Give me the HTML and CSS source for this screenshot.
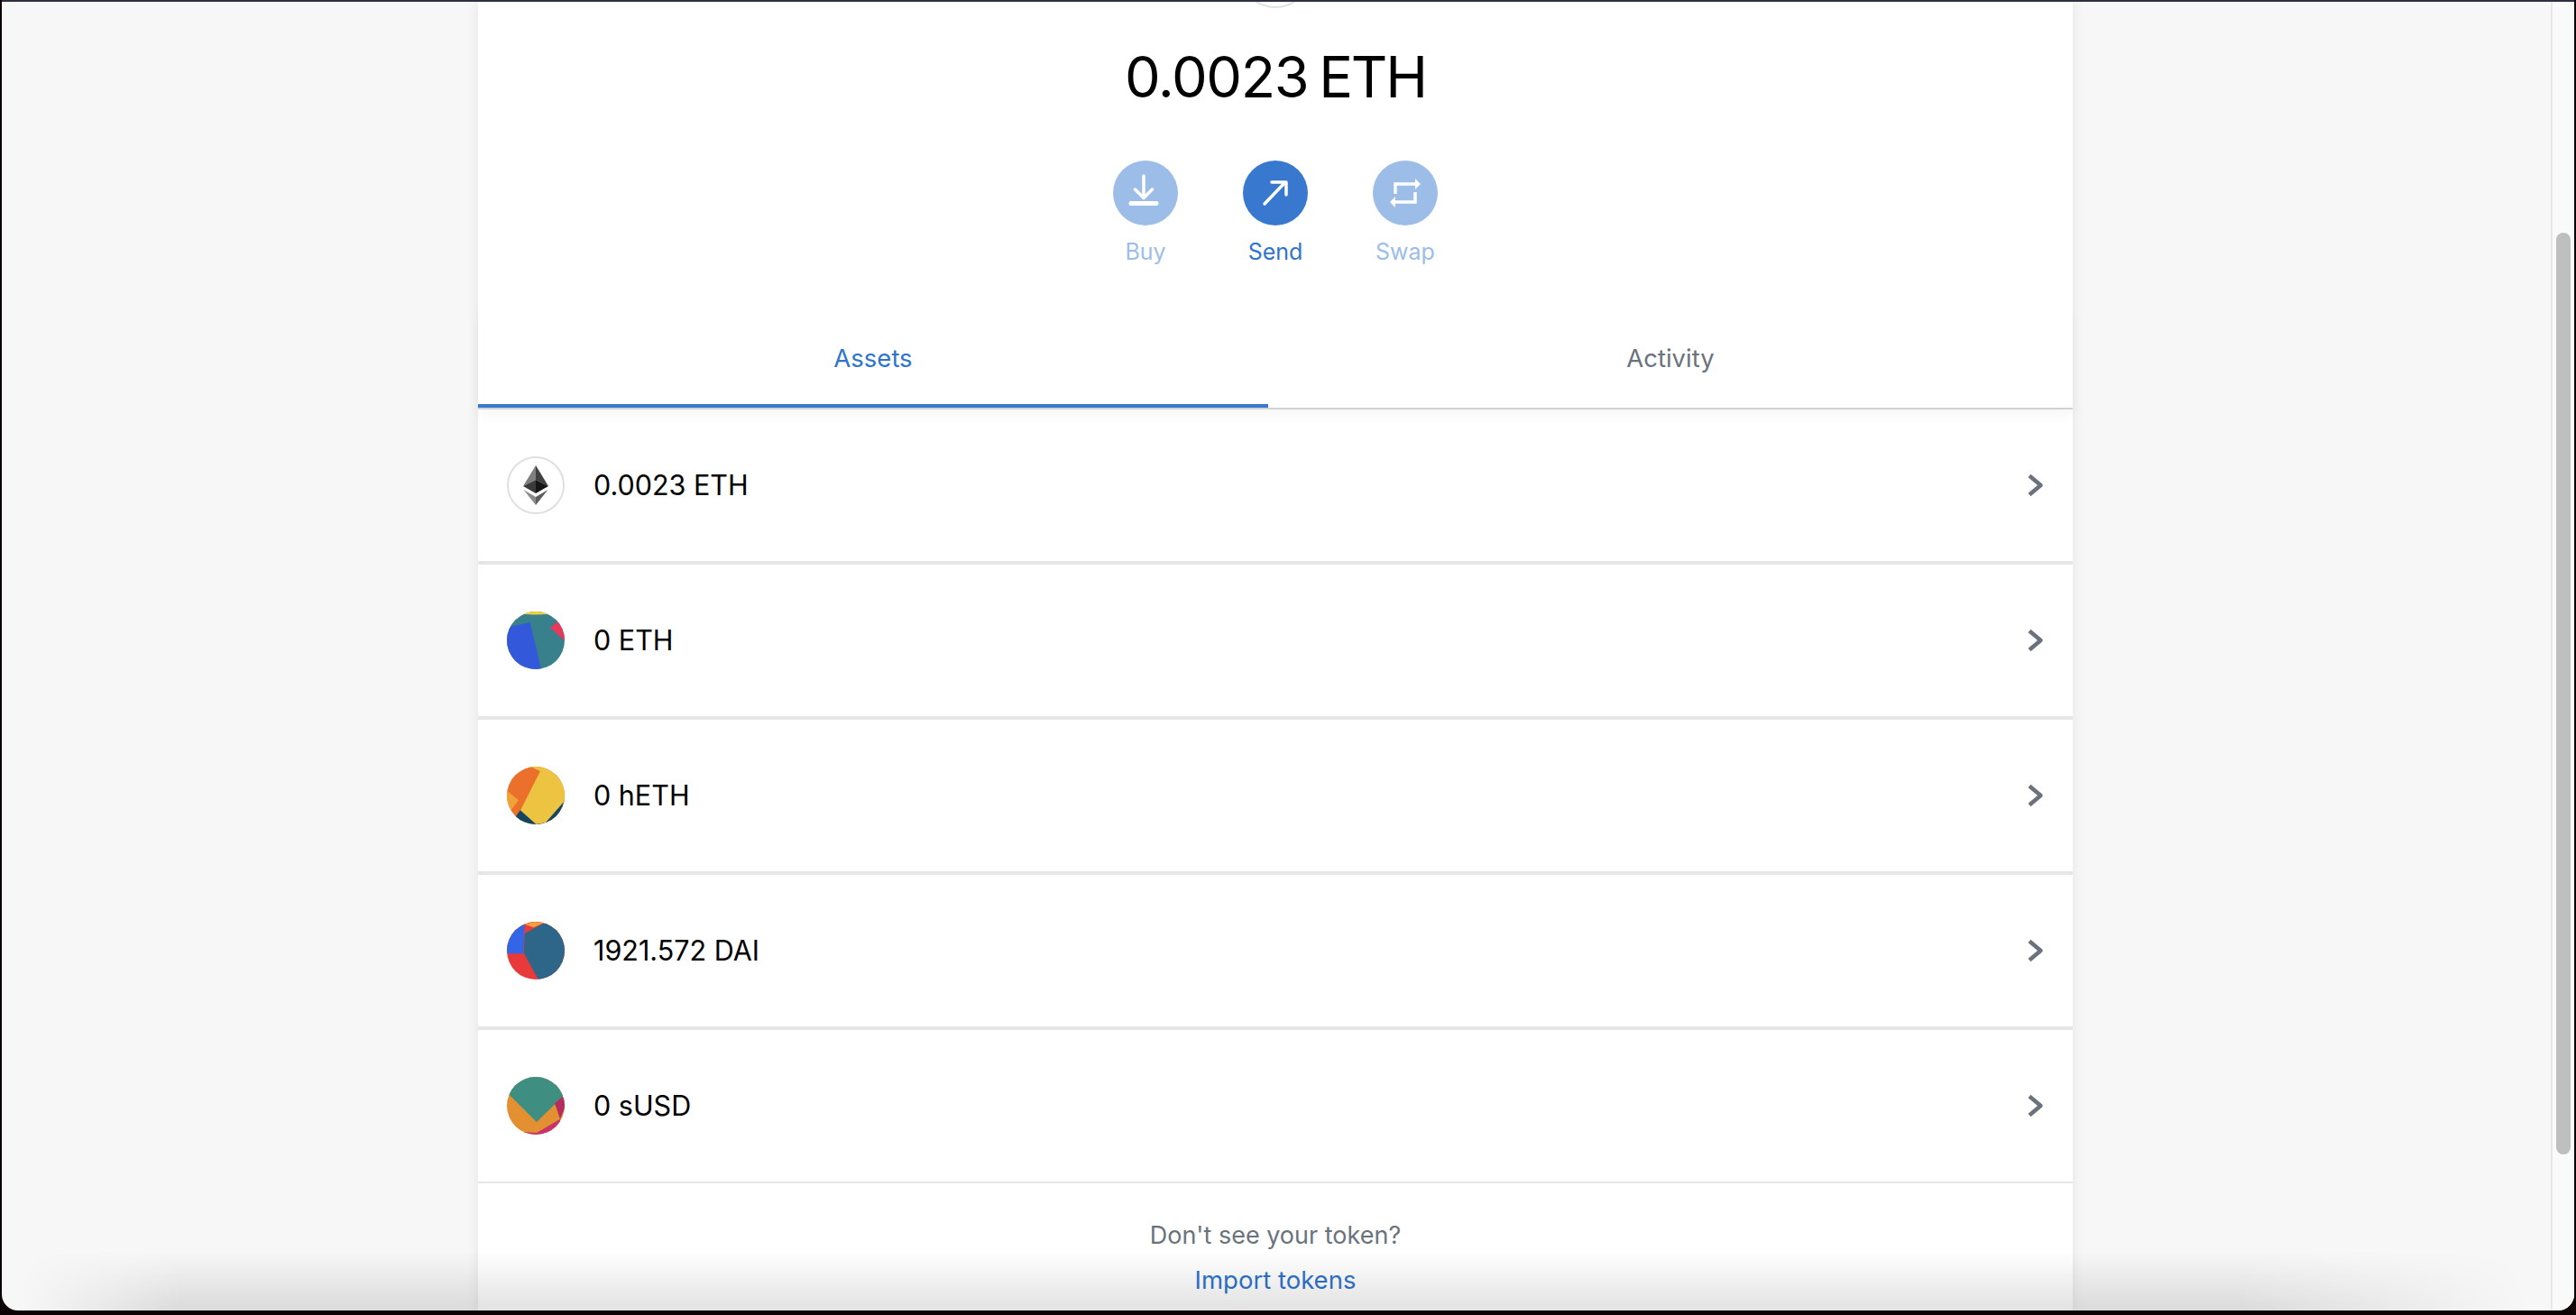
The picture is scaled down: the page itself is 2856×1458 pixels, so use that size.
FILE: index.html
```html
<!DOCTYPE html>
<html lang="en">
<head>
  <meta charset="UTF-8" />
  <title>Wallet</title>
  <link rel="stylesheet" href="styles.css">
</head>
<body>
  <div class="window">
    <div class="page">
      <main class="card">
        <div class="avatar"></div>

        <div class="balance">
          <span class="balance-value">0.0023</span>
          <span>ETH</span>
        </div>

        <div class="actions">
          <div class="action faded">
            <div class="action-icon">
              <svg width="72" height="72" viewBox="0 0 72 72" fill="none" stroke="#fff" stroke-width="3.5" stroke-linecap="round" stroke-linejoin="round">
                <path d="M34 17V41M24.5 32L34 41.5L43.5 32" />
                <path d="M20 47.5H48" stroke-width="5" />
              </svg>
            </div>
            <span>Buy</span>
          </div>
          <div class="action">
            <div class="action-icon">
              <svg width="72" height="72" viewBox="0 0 72 72" fill="none" stroke="#fff" stroke-width="3.5" stroke-linecap="round" stroke-linejoin="round">
                <path d="M24 48L47 24M32 24H48V38" />
              </svg>
            </div>
            <span>Send</span>
          </div>
          <div class="action faded">
            <div class="action-icon">
              <svg width="72" height="72" viewBox="0 0 72 72" fill="none" stroke="#fff" stroke-width="3.5">
                <path d="M25 37V26H48M47 35V46H24" />
                <path d="M47 20L53 26L47 32ZM25 40L19 46L25 52Z" fill="#fff" stroke="none" />
              </svg>
            </div>
            <span>Swap</span>
          </div>
        </div>

        <div class="tabs">
          <div class="tab active">Assets</div>
          <div class="tab">Activity</div>
        </div>

        <div class="assets">
          <div class="asset">
            <svg class="token" width="64" height="64" viewBox="0 0 64 64">
              <circle cx="32" cy="32" r="31" fill="#fff" stroke="#e0e0e0" stroke-width="2" />
              <path d="M32 10L18 33L32 26Z" fill="#7f7f7f" />
              <path d="M32 10L46 33L32 26Z" fill="#404040" />
              <path d="M18 33L32 26V41Z" fill="#3b3b3b" />
              <path d="M46 33L32 26V41Z" fill="#161616" />
              <path d="M18.5 37L32 45V54Z" fill="#8c8c8c" />
              <path d="M45.5 37L32 45V54Z" fill="#5e5e5e" />
            </svg>
            <span class="asset-name">0.0023 ETH</span>
            <svg class="chevron" width="20" height="32" viewBox="0 0 20 32" fill="none" stroke="#6a737d" stroke-width="4.5" stroke-linejoin="round">
              <path d="M4 5.5L16.5 16L4 26.5" />
            </svg>
          </div>

          <div class="asset">
            <svg class="token" width="64" height="64" viewBox="0 0 64 64">
              <clipPath id="clip-eth"><circle cx="32" cy="32" r="32" /></clipPath>
              <g clip-path="url(#clip-eth)">
                <rect width="64" height="64" fill="#38808c" />
                <path d="M18 0H46V3L32 3.5L18 3Z" fill="#f0d23c" />
                <path d="M0 18L3 17L25.7 12L38 64H0Z" fill="#3358d9" />
                <path d="M48 18L58 10H66V34Z" fill="#e8385c" />
              </g>
            </svg>
            <span class="asset-name">0 ETH</span>
            <svg class="chevron" width="20" height="32" viewBox="0 0 20 32" fill="none" stroke="#6a737d" stroke-width="4.5" stroke-linejoin="round">
              <path d="M4 5.5L16.5 16L4 26.5" />
            </svg>
          </div>

          <div class="asset">
            <svg class="token" width="64" height="64" viewBox="0 0 64 64">
              <clipPath id="clip-heth"><circle cx="32" cy="32" r="32" /></clipPath>
              <g clip-path="url(#clip-heth)">
                <rect width="64" height="64" fill="#ea702b" />
                <path d="M0 26.7L13 37.3L4.7 48L0 40Z" fill="#f2a336" />
                <path d="M10 55L15 48L40 50L66 36V66H10Z" fill="#14465f" />
                <path d="M26 0L37 5L15 48.5L32.5 64L43 62L64 38L66 30V0Z" fill="#ecc442" />
              </g>
            </svg>
            <span class="asset-name">0 hETH</span>
            <svg class="chevron" width="20" height="32" viewBox="0 0 20 32" fill="none" stroke="#6a737d" stroke-width="4.5" stroke-linejoin="round">
              <path d="M4 5.5L16.5 16L4 26.5" />
            </svg>
          </div>

          <div class="asset">
            <svg class="token" width="64" height="64" viewBox="0 0 64 64">
              <clipPath id="clip-dai"><circle cx="32" cy="32" r="32" /></clipPath>
              <g clip-path="url(#clip-dai)">
                <rect width="64" height="64" fill="#e83a3a" />
                <path d="M19.7 0L18 35.3H0V0Z" fill="#3366e6" />
                <path d="M19.7 13L40 2L66 0V66H36L18.7 34.7Z" fill="#2d6688" />
                <path d="M19.7 3L30 0L41 1.3L29.7 6.3Z" fill="#f1a23a" />
              </g>
            </svg>
            <span class="asset-name">1921.572 DAI</span>
            <svg class="chevron" width="20" height="32" viewBox="0 0 20 32" fill="none" stroke="#6a737d" stroke-width="4.5" stroke-linejoin="round">
              <path d="M4 5.5L16.5 16L4 26.5" />
            </svg>
          </div>

          <div class="asset">
            <svg class="token" width="64" height="64" viewBox="0 0 64 64">
              <clipPath id="clip-susd"><circle cx="32" cy="32" r="32" /></clipPath>
              <g clip-path="url(#clip-susd)">
                <rect width="64" height="64" fill="#e39032" />
                <path d="M0 17L3 20.3L33 50L62 21.7L66 20V0H0Z" fill="#3e8e82" />
                <path d="M53 29.3L62 21.7L66 30L59 46.7Z" fill="#b52c5e" />
                <path d="M18 61L33 62L59 46.7V66H18Z" fill="#c8336a" />
              </g>
            </svg>
            <span class="asset-name">0 sUSD</span>
            <svg class="chevron" width="20" height="32" viewBox="0 0 20 32" fill="none" stroke="#6a737d" stroke-width="4.5" stroke-linejoin="round">
              <path d="M4 5.5L16.5 16L4 26.5" />
            </svg>
          </div>
        </div>

        <div class="import">
          <p>Don't see your token?</p>
          <a href="#import">Import tokens</a>
        </div>
      </main>
    </div>

    <div class="scrollbar">
      <div class="thumb"></div>
    </div>

    <div class="dock-shadow"></div>
  </div>
</body>
</html>
```

FILE: styles.css
```css
body {
  margin: 0;
  height: 1458px;
  overflow: hidden;
  padding-left: 2px;
  padding-right: 2px;
  box-sizing: border-box;
  background: #0d0305;
  font-family: Inter, "Liberation Sans", sans-serif;
}

.window {
  position: relative;
  display: flex;
  height: 1453px;
  box-sizing: border-box;
  border-top: 2px solid #2d3040;
  border-radius: 0 0 18px 18px;
  overflow: hidden;
  background: #f7f7f7;
}

.page {
  flex: 1;
  display: flex;
  justify-content: center;
  padding-right: 2px;
}

.card {
  position: relative;
  width: 1768px;
  flex: none;
  background: #fff;
  box-shadow: 0 0 14px rgba(0, 0, 0, 0.08);
}

.avatar {
  position: absolute;
  top: -73px;
  left: 50%;
  width: 76px;
  height: 76px;
  margin-left: -40px;
  border: 2px solid #e0e0e0;
  border-radius: 50%;
}

.balance {
  display: flex;
  justify-content: center;
  align-items: center;
  gap: 12px;
  height: 166px;
  margin-bottom: 10px;
  font-size: 63px;
  letter-spacing: -2.2px;
  color: #000;
}

.balance-value {
  letter-spacing: -1.4px;
}

.actions {
  display: flex;
  justify-content: center;
  gap: 72px;
}

.action {
  width: 72px;
  height: 118px;
  display: flex;
  flex-direction: column;
  align-items: center;
  font-size: 25px;
  line-height: 32px;
  color: #2f74cc;
}

.action-icon {
  width: 72px;
  height: 72px;
  margin-bottom: 13px;
  border-radius: 50%;
  background: #3878cf;
}

.action-icon svg {
  display: block;
}

.action.faded {
  color: #9dbde9;
}

.action.faded .action-icon {
  background: #9dbde9;
}

.tabs {
  position: relative;
  display: grid;
  grid-template-columns: 876px 1fr;
  margin-top: 48px;
  border-bottom: 2px solid #d2d2d2;
  box-shadow: 0 6px 14px rgba(0, 0, 0, 0.04);
}

.tab {
  display: flex;
  justify-content: center;
  align-items: center;
  height: 108px;
  padding-top: 1px;
  box-sizing: border-box;
  border-bottom: 4px solid transparent;
  font-size: 27.5px;
  color: #6a737d;
}

.tab.active {
  color: #2f74cc;
  border-bottom-color: #3878cf;
}

.asset {
  display: flex;
  align-items: center;
  height: 168px;
  padding: 0 32px;
  border-bottom: 4px solid #e6e6e6;
}

.asset:last-child {
  border-bottom-width: 2px;
}

.token {
  flex: none;
  margin-right: 32px;
}

.asset-name {
  flex: 1;
  padding-bottom: 2px;
  font-size: 30.5px;
  color: #000;
}

.chevron {
  flex: none;
}

.import {
  display: flex;
  flex-direction: column;
  align-items: center;
  padding-top: 40px;
  font-size: 27px;
  line-height: 36px;
}

.import p {
  margin: 0 0 13px;
  color: #6a737d;
}

.import a {
  font-size: 27.5px;
  color: #2f74cc;
  text-decoration: none;
}

.scrollbar {
  flex: none;
  width: 26px;
  padding-left: 4px;
  box-sizing: border-box;
  border-left: 2px solid #e8e8e8;
  background: #fafafa;
}

.thumb {
  width: 16px;
  height: 1022px;
  margin-top: 256px;
  border-radius: 8px;
  background: #bfbfbf;
}

/* dock shadow over the bottom edge of the window */
.dock-shadow {
  position: absolute;
  left: 0;
  right: 0;
  bottom: 0;
  height: 66px;
  background: linear-gradient(rgba(0, 0, 0, 0), rgba(0, 0, 0, 0.115));
  -webkit-mask-image: linear-gradient(90deg, transparent 20px, #000 200px, #000 2480px, transparent 2800px);
  mask-image: linear-gradient(90deg, transparent 20px, #000 200px, #000 2480px, transparent 2800px);
  pointer-events: none;
}
```
